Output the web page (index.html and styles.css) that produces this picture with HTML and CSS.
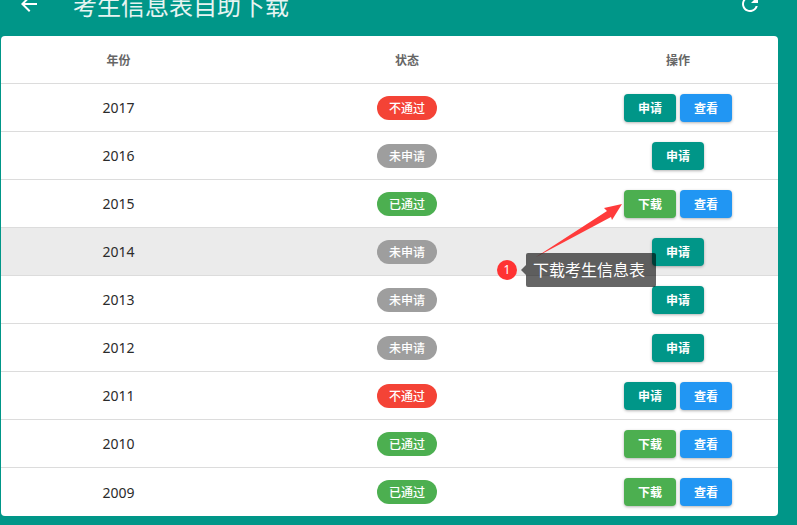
FILE: index.html
```html
<!DOCTYPE html>
<html lang="zh">
<head>
<meta charset="utf-8">
<title>考生信息表自助下载</title>
<link rel="stylesheet" href="styles.css">
</head>
<body>
<div class="page">
  <header class="bar">
    <svg class="back" viewBox="0 0 24 24"><path d="M20 11H7.83l5.59-5.59L12 4l-8 8 8 8 1.41-1.41L7.83 13H20z"/></svg>
    <h1 class="title">考生信息表自助下载</h1>
    <svg class="refresh" viewBox="0 0 24 24"><path d="M17.65 6.35A7.958 7.958 0 0 0 12 4c-4.42 0-7.99 3.58-7.99 8s3.57 8 7.99 8c3.73 0 6.84-2.55 7.73-6h-2.08A5.99 5.99 0 0 1 12 18c-3.31 0-6-2.69-6-6s2.69-6 6-6c1.66 0 3.14.69 4.22 1.78L13 11h7V4l-2.35 2.35z"/></svg>
  </header>
  <main class="card">
    <div class="row head"><div>年份</div><div>状态</div><div>操作</div></div>
    <div class="row"><div>2017</div><div><span class="badge red">不通过</span></div><div class="ops"><a class="btn teal">申请</a><a class="btn blue">查看</a></div></div>
    <div class="row"><div>2016</div><div><span class="badge grey">未申请</span></div><div class="ops"><a class="btn teal">申请</a></div></div>
    <div class="row"><div>2015</div><div><span class="badge green">已通过</span></div><div class="ops"><a class="btn green">下载</a><a class="btn blue">查看</a></div></div>
    <div class="row hover"><div>2014</div><div><span class="badge grey">未申请</span></div><div class="ops"><a class="btn teal">申请</a></div></div>
    <div class="row"><div>2013</div><div><span class="badge grey">未申请</span></div><div class="ops"><a class="btn teal">申请</a></div></div>
    <div class="row"><div>2012</div><div><span class="badge grey">未申请</span></div><div class="ops"><a class="btn teal">申请</a></div></div>
    <div class="row"><div>2011</div><div><span class="badge red">不通过</span></div><div class="ops"><a class="btn teal">申请</a><a class="btn blue">查看</a></div></div>
    <div class="row"><div>2010</div><div><span class="badge green">已通过</span></div><div class="ops"><a class="btn green">下载</a><a class="btn blue">查看</a></div></div>
    <div class="row last"><div>2009</div><div><span class="badge green">已通过</span></div><div class="ops"><a class="btn green">下载</a><a class="btn blue">查看</a></div></div>
  </main>
  <svg class="arrow" viewBox="0 0 100 60" width="100" height="60"><path d="M12 57 L83 11 L80 8 L98 4 L88 20 L87 17 Z"/></svg>
  <span class="step">1</span>
  <div class="tip">下载考生信息表</div>
</div>
</body>
</html>
```
FILE: styles.css
```css
* { box-sizing: border-box; }
html, body { margin: 0; padding: 0; }
body { font-family: "Noto Sans", "Noto Sans CJK SC", sans-serif; }
.page { position: relative; width: 797px; height: 525px; background: #009688; overflow: hidden; }
.bar { height: 36px; display: flex; align-items: flex-end; padding: 0 35px 18px 17px; color: #fff; overflow: hidden; }
.back, .refresh { width: 24px; height: 24px; fill: #fff; flex: none; margin-bottom: 2px; }
.title { margin: 0 0 0 32px; font-size: 24px; line-height: 24px; font-weight: 400; flex: 1; white-space: nowrap; color: #e6f4f2; }
.card { margin-left: 1px; width: 777px; height: 480px; background: #fff; border-radius: 4px; overflow: hidden; }
.row { display: grid; grid-template-columns: 235px 342px 200px; height: 48px; align-items: center; text-align: center; font-size: 14px; color: #2b2b2b; border-bottom: 1px solid #dcdcdc; }
.row.head { height: 48px; font-size: 12px; font-weight: 700; color: #666; }
.row.hover { background: #ebebeb; }
.row.last { border-bottom: 0; }
.badge { display: inline-block; width: 60px; height: 24px; line-height: 26px; border-radius: 12px; font-size: 12px; font-weight: 500; color: #fff; vertical-align: middle; }
.red { background: #f44336; }
.grey { background: #9e9e9e; }
.green { background: #4caf50; }
.teal { background: #009688; }
.blue { background: #2196f3; }
.ops { display: flex; justify-content: center; gap: 4px; }
.btn { width: 52px; height: 28px; line-height: 30px; border-radius: 4px; font-size: 12px; font-weight: 700; color: #fff; box-shadow: 0 1px 3px rgba(0,0,0,.3); }
.arrow { position: absolute; left: 524px; top: 200px; fill: #ff3b3b; }
.step { position: absolute; left: 497px; top: 260px; width: 20px; height: 20px; line-height: 20px; border-radius: 50%; background: #ff3333; color: #fff; font-size: 12px; text-align: center; }
.tip { position: absolute; left: 526px; top: 253px; width: 130px; height: 34px; line-height: 34px; padding-left: 7px; border-radius: 2px; background: rgba(0,0,0,.6); color: #fff; font-size: 16px; white-space: nowrap; }
.tip::before { content: ""; position: absolute; left: -5px; top: 12px; border: 5px solid transparent; border-left: 0; border-right-color: rgba(0,0,0,.6); }
```
